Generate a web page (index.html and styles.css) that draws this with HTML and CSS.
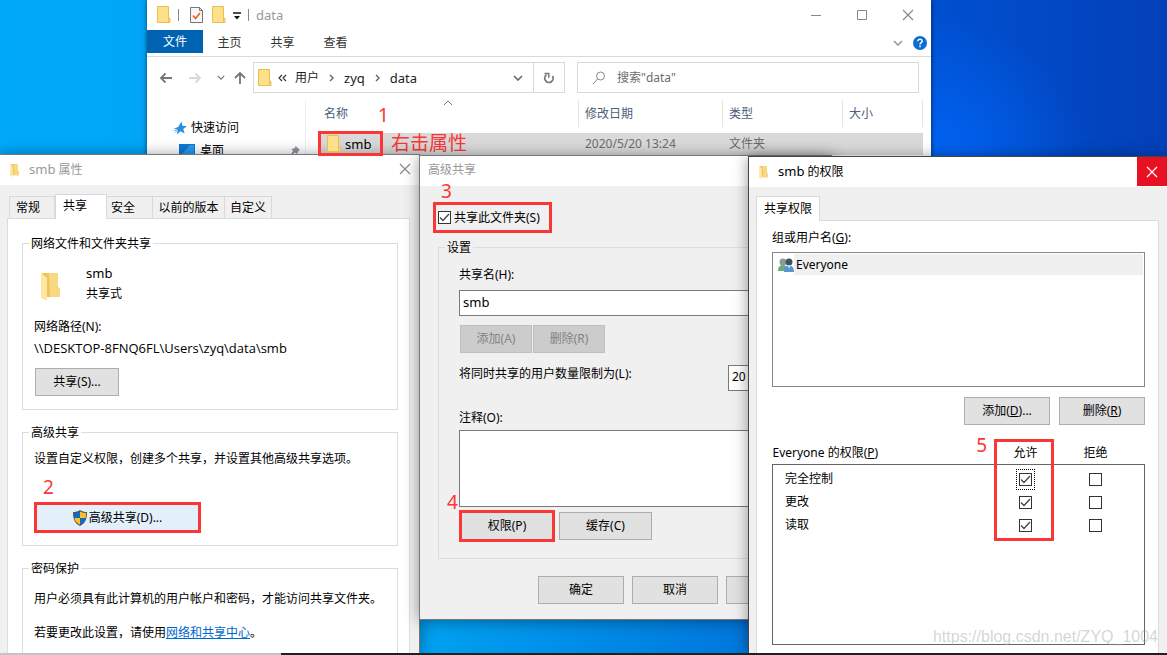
FILE: index.html
```html
<!DOCTYPE html>
<html lang="zh-CN">
<head>
<meta charset="utf-8">
<title>共享文件夹设置</title>
<link rel="stylesheet" href="styles.css">
</head>
<body>
<svg class="defs" aria-hidden="true">
  <symbol id="folder" viewBox="0 0 14 17">
    <path d="M.5.5h11v11l1.500 1v4H.5z" fill="#ffe08a" stroke="#e8c04e"/>
    <path d="M11.500 11.500v5" stroke="#e8c04e" fill="none"/>
  </symbol>
  <symbol id="folder-open" viewBox="0 0 19 28">
    <path d="M1 0h16v14l2 2v8H6z" fill="#ecc560"/>
    <path d="M8 0h9v14l2 2v8H9z" fill="#f8d880"/>
    <path d="M0 0l6 5v23l-6-3z" fill="#ffe7a0"/>
  </symbol>
  <symbol id="close" viewBox="0 0 12 12">
    <path d="M1 1l10 10M11 1L1 11" fill="none" stroke="currentColor" stroke-width="1.200"/>
  </symbol>
  <symbol id="chevron" viewBox="0 0 10 6">
    <path d="M1 1l4 4 4-4" fill="none" stroke="currentColor" stroke-width="1.600"/>
  </symbol>
</svg>
<main class="desktop">

  <section class="window explorer">
    <header class="explorer-title">
      <svg class="folder"><use href="#folder"/></svg>
      <i class="divider"></i>
      <svg class="doc" viewBox="0 0 13 16"><path d="M.5.5h9l3 3v12H.5z" fill="#f6f6f6" stroke="#777"/><path d="M9.500.5v3h3" fill="none" stroke="#777"/><path d="M3 8.500l2.500 3L10 6" fill="none" stroke="#e8601c" stroke-width="1.600"/></svg>
      <svg class="folder"><use href="#folder"/></svg>
      <svg class="quick" viewBox="0 0 8 8"><path d="M0 1h8" stroke="#111" stroke-width="1.500"/><path d="M1 4h6L4 7.500z" fill="#111"/></svg>
      <i class="divider"></i>
      <span class="latin">data</span>
      <div class="controls">
        <button aria-label="最小化"><svg viewBox="0 0 12 12"><path d="M1 6.500h10" stroke="currentColor"/></svg></button>
        <button aria-label="最大化"><svg viewBox="0 0 12 12"><path d="M1.500 1.500h9v9h-9z" fill="none" stroke="currentColor"/></svg></button>
        <button aria-label="关闭"><svg><use href="#close"/></svg></button>
      </div>
    </header>
    <nav class="ribbon">
      <button class="file">文件</button><button>主页</button><button>共享</button><button>查看</button>
      <span class="ribbon-end"><svg class="chev"><use href="#chevron"/></svg>
        <svg class="help" viewBox="0 0 14 14"><circle cx="7" cy="7" r="7" fill="#0a6fd0"/><path d="M4.800 5.200C4.800 2.600 9.300 2.700 9.200 5.200 9.100 6.600 7 6.700 7 8.500M7 9.600v1.700" fill="none" stroke="#fff" stroke-width="1.500"/></svg></span>
    </nav>
    <div class="address-row">
      <svg class="arrow" viewBox="0 0 14 12"><path d="M13 6H2M6.500 1.500L2 6l4.500 4.500" fill="none" stroke="#777" stroke-width="1.800"/></svg>
      <svg class="arrow" viewBox="0 0 14 12"><path d="M1 6h11M7.500 1.500L12 6l-4.500 4.500" fill="none" stroke="#d8d8d8" stroke-width="1.800"/></svg>
      <svg class="mini"><use href="#chevron"/></svg>
      <svg class="up" viewBox="0 0 12 14"><path d="M6 13V2M1 7l5-5 5 5" fill="none" stroke="#777" stroke-width="1.800"/></svg>
      <div class="address">
        <svg class="folder"><use href="#folder"/></svg>
        <svg class="crumb-more" viewBox="0 0 9 8"><path d="M4 1L1 4l3 3M8 1L5 4l3 3" fill="none" stroke="#333" stroke-width="1.200"/></svg>
        <span>用户</span><svg class="sep" viewBox="0 0 5 8"><path d="M1 1l3 3-3 3" fill="none" stroke="#666" stroke-width="1.400"/></svg>
        <span class="latin">zyq</span><svg class="sep" viewBox="0 0 5 8"><path d="M1 1l3 3-3 3" fill="none" stroke="#666" stroke-width="1.400"/></svg>
        <span class="latin">data</span>
        <svg class="drop"><use href="#chevron"/></svg>
        <button class="refresh" aria-label="刷新"><svg viewBox="0 0 12 12"><path d="M3.500 2.800A4.200 4.200 0 1 0 9.500 4" fill="none" stroke="#777" stroke-width="1.800"/><path d="M1.500 1.500h4.300v4.300" fill="none" stroke="#777" stroke-width="1.500"/></svg></button>
      </div>
      <label class="search">
        <svg viewBox="0 0 14 14"><circle cx="8.500" cy="5" r="4" fill="none" stroke="#888"/><path d="M5.500 8L1 13" stroke="#888"/></svg>
        <input type="text" aria-label="搜索" placeholder='搜索"data"'>
      </label>
    </div>
    <div class="explorer-main">
      <aside class="places">
        <div class="place"><svg class="star" viewBox="0 0 14 14"><path d="M8 0l1 4.500 5 .5-4 3 1.500 5L7 10.500 3 14l1-5-4-1.500 4.500-1.500z" fill="#2b8fdc"/><path d="M1 12l3-3M0 9.500h3" stroke="#65b3ea"/></svg>快速访问</div>
        <div class="place sub"><svg class="screen" viewBox="0 0 16 13"><path d="M0 0h16v13H0z" fill="#0f78d4"/><path d="M1 12L11 1h4v11z" fill="#2999ef"/></svg>桌面
          <svg class="pin" viewBox="0 0 10 10"><path d="M5.500 0L10 4 8.500 5 7 8 5 6.500 0 10l3-5L1.500 3 5 2z" fill="#8a949e"/></svg></div>
      </aside>
      <table class="files">
        <thead><tr><th class="c-name">名称<svg class="sort" viewBox="0 0 10 6"><path d="M1 5l4-4 4 4" fill="none" stroke="#777"/></svg><b class="num n1">1</b></th><th class="c-date">修改日期</th><th class="c-type">类型</th><th class="c-size">大小</th></tr></thead>
        <tbody><tr><td><span class="mark file-mark"><svg class="folder"><use href="#folder"/></svg><span class="latin">smb</span></span><b class="note">右击属性</b></td><td>2020/5/20 13:24</td><td>文件夹</td><td></td></tr></tbody>
      </table>
    </div>
  </section>

  <section class="window properties">
    <header class="title inactive">
      <svg class="folder-small"><use href="#folder-open"/></svg><span><span class="latin">smb</span> 属性</span>
      <button class="close" aria-label="关闭"><svg><use href="#close"/></svg></button>
    </header>
    <div class="tabs">
      <button>常规</button><button class="selected">共享</button><button>安全</button><button>以前的版本</button><button>自定义</button>
    </div>
    <div class="page">
      <fieldset class="g-share">
        <legend>网络文件和文件夹共享</legend>
        <div class="item"><svg class="folder-big"><use href="#folder-open"/></svg><div><p class="latin">smb</p><p>共享式</p></div></div>
        <p class="path-label">网络路径(N):</p>
        <p class="path">\\DESKTOP-8FNQ6FL\Users\zyq\data\smb</p>
        <button class="btn share-btn">共享(S)...</button>
      </fieldset>
      <fieldset class="g-adv">
        <legend>高级共享</legend>
        <p>设置自定义权限，创建多个共享，并设置其他高级共享选项。</p>
        <div class="adv-row"><b class="num n2">2</b>
          <button class="mark adv-btn"><svg viewBox="0 0 14 16"><path d="M7 0c2 1.500 4.500 2 7 2 0 6-1 11-7 14C1 13 0 8 0 2c2.500 0 5-.5 7-2z" fill="#555"/><path d="M7 1.500V8H1.300L1 3c2 0 4-.5 6-1.500z" fill="#1769c6"/><path d="M7 1.500V8h5.700L13 3c-2 0-4-.5-6-1.500z" fill="#fbc02d"/><path d="M7 8v6.700C3.500 13 2 11 1.300 8z" fill="#fbc02d"/><path d="M7 8v6.700c3.500-1.700 5-3.700 5.700-6.700z" fill="#1769c6"/></svg>高级共享(D)...</button></div>
      </fieldset>
      <fieldset class="g-pass">
        <legend>密码保护</legend>
        <p>用户必须具有此计算机的用户帐户和密码，才能访问共享文件夹。</p>
        <p class="center-link">若要更改此设置，请使用<a href="#">网络和共享中心</a>。</p>
      </fieldset>
    </div>
  </section>

  <section class="window advanced">
    <header class="title inactive plain"><span>高级共享</span></header>
    <div class="adv-body">
      <div class="check-row"><b class="num n3">3</b>
        <label class="mark check-label"><input type="checkbox" checked>共享此文件夹(S)</label></div>
      <fieldset class="g-settings">
        <legend>设置</legend>
        <label class="line" for="share-name">共享名(H):</label>
        <input class="box latin" id="share-name" type="text" value="smb">
        <div class="pair"><button class="btn" disabled>添加(A)</button><button class="btn" disabled>删除(R)</button></div>
        <div class="limit"><label for="limit">将同时共享的用户数量限制为(L):</label><input class="box" id="limit" type="text" value="20"></div>
        <label class="line comment-label" for="comment">注释(O):</label>
        <textarea class="box" id="comment"></textarea>
        <div class="actions"><b class="num n4">4</b><button class="btn mark perm-btn">权限(P)</button><button class="btn cache-btn">缓存(C)</button></div>
      </fieldset>
      <footer><button class="btn">确定</button><button class="btn">取消</button><button class="btn">应用</button></footer>
    </div>
  </section>

  <section class="window permissions">
    <header class="title">
      <svg class="folder-small"><use href="#folder-open"/></svg><span><span class="latin">smb</span> 的权限</span>
      <button class="close red" aria-label="关闭"><svg><use href="#close"/></svg></button>
    </header>
    <div class="tabs"><button class="selected">共享权限</button></div>
    <div class="page">
      <p>组或用户名(<u>G</u>):</p>
      <ul class="users"><li><svg viewBox="0 0 16 14"><circle cx="5" cy="4" r="3.500" fill="#8b9c94"/><path d="M0 13c0-4 2-6 5-6s4 2 4 6z" fill="#6ea882"/><circle cx="11" cy="4" r="3.500" fill="#3d5266"/><path d="M6 14c0-5 2-6.500 5-6.500s5 2 5 6.500z" fill="#5b95cf"/><path d="M9.500 7.500l1.500 3 1.500-3z" fill="#e5eef7"/></svg><span>Everyone</span></li></ul>
      <div class="user-actions"><button class="btn">添加(<u>D</u>)...</button><button class="btn">删除(<u>R</u>)</button></div>
      <div class="grants-wrap">
        <table class="grants">
          <thead><tr><th>Everyone 的权限(<u>P</u>)</th><th class="c-allow">允许</th><th class="c-deny">拒绝</th><th class="c-end"></th></tr></thead>
          <tbody>
            <tr><td>完全控制</td><td><span class="focus"><input type="checkbox" checked aria-label="完全控制 允许"></span></td><td><input type="checkbox" aria-label="完全控制 拒绝"></td><td></td></tr>
            <tr><td>更改</td><td><input type="checkbox" checked aria-label="更改 允许"></td><td><input type="checkbox" aria-label="更改 拒绝"></td><td></td></tr>
            <tr><td>读取</td><td><input type="checkbox" checked aria-label="读取 允许"></td><td><input type="checkbox" aria-label="读取 拒绝"></td><td></td></tr>
          </tbody>
        </table>
        <i class="mark allow-mark"></i><b class="num n5">5</b>
      </div>
    </div>
  </section>

  <div class="taskbar"></div>
  <div class="watermark">https://blog.csdn.net/ZYQ_1004</div>
</main>
</body>
</html>
```
FILE: styles.css
```css
* { box-sizing: border-box; }
body, p, ul, fieldset { margin: 0; padding: 0; }
body, button, input, textarea {
  font-family: "Noto Sans", "Noto Sans CJK SC", sans-serif;
  font-size: 12px;
  line-height: 20px;
  color: #000;
}
button { margin: 0; padding: 0; border: 0; background: none; white-space: nowrap; }
svg { display: block; flex: none; }
th { font-weight: 400; text-align: left; }
.defs { position: absolute; width: 0; height: 0; }
.latin { font-size: 13px; }
.path { font-family: "Open Sans", "Noto Sans", sans-serif; font-size: 13px; }

.desktop {
  position: relative;
  height: 100vh;
  overflow: hidden;
  background:
    radial-gradient(circle at 80% 25%, #0064f4 0, rgba(0, 90, 230, 0) 150px),
    linear-gradient(90deg, #00a8fa 0%, #00a0f0 37%, #0078dc 63%, #0050d0 80%, #0340b8 100%);
}
.window { position: absolute; background: #f0f0f0; box-shadow: 0 1px 14px rgba(0, 0, 0, .4); }

/* annotations */
.mark { border: 3px solid #fb3636; }
.num, .note { position: absolute; color: #fb3636; font-weight: 400; font-size: 19px; line-height: 20px; }

/* explorer */
.explorer { left: 147px; right: 236px; top: 0; background: #fff; box-shadow: 0 0 5px rgba(0, 0, 0, .6); }
.folder { width: 14px; height: 17px; }
.explorer-title { display: flex; align-items: center; height: 29px; padding-left: 10px; color: #999; }
.divider { width: 1px; height: 12px; margin: 0 7px; background: #888; }
.doc { width: 13px; height: 16px; margin: 0 9px 0 4px; }
.quick { width: 8px; height: 8px; margin: 3px 0 0 7px; }
.controls { display: flex; margin-left: auto; }
.controls button { display: grid; place-items: center; width: 46px; height: 29px; color: #888; }
.controls svg { width: 12px; height: 12px; }
.ribbon { display: flex; height: 28px; padding-top: 1px; border-bottom: 1px solid #dadada; }
.ribbon button { width: 53px; height: 25px; color: #333; }
.ribbon .file { width: 56px; height: 23px; background: #0063b1; color: #fff; }
.ribbon-end { display: flex; align-items: center; gap: 10px; margin-left: auto; padding-right: 4px; color: #999; }
.chev { width: 10px; height: 6px; }
.help { width: 14px; height: 14px; }
.address-row { display: flex; align-items: center; height: 36px; padding: 5px 12px 0 12px; color: #777; }
.arrow { width: 14px; height: 12px; margin-right: 15px; }
.mini { width: 8px; height: 5px; margin-right: 9px; }
.up { width: 12px; height: 14px; margin-right: 7px; }
.address { display: flex; align-items: center; width: 312px; height: 31px; padding-left: 4px; border: 1px solid #d9d9d9; color: #222; }
.crumb-more { width: 9px; height: 8px; margin: 0 8px 0 6px; }
.sep { width: 5px; height: 8px; margin: 0 10px; }
.drop { width: 10px; height: 6px; margin: 0 10px 0 auto; color: #666; }
.refresh { display: grid; place-items: center; width: 31px; height: 29px; border-left: 1px solid #d9d9d9; }
.refresh svg { width: 12px; height: 12px; }
.search { display: flex; flex: 1; align-items: center; height: 31px; margin-left: 12px; padding-left: 14px; border: 1px solid #d9d9d9; }
.search svg { width: 14px; height: 14px; }
.search input { flex: 1; min-width: 0; margin-left: 11px; padding: 0; border: 0; outline: 0; background: none; }
.search input::placeholder { color: #6d6d6d; }
.explorer-main { display: flex; padding-top: 7px; }
.places { width: 159px; padding: 16px 5px 0 27px; border-right: 1px solid #eee; }
.place { display: flex; align-items: center; gap: 4px; height: 23px; }
.sub { padding-left: 5px; gap: 5px; }
.star { width: 13px; height: 14px; }
.screen { width: 16px; height: 13px; }
.pin { width: 10px; height: 10px; margin-left: auto; }
.files { flex: 1; align-self: flex-start; margin: 0 8px 0 12px; border-spacing: 0; table-layout: fixed; }
.files th { position: relative; height: 27px; padding: 0 0 0 6px; border-right: 1px solid #e5e5e5; color: #4c607a; }
.files tbody::before { content: ""; display: block; height: 6px; }
.files td { position: relative; height: 22px; padding: 0 0 0 6px; background: #d9d9d9; color: #6d6d6d; }
.c-date { width: 144px; }
.c-type { width: 120px; }
.c-size { width: 80px; }
.sort { position: absolute; left: 125px; top: 0; width: 10px; height: 6px; }
.n1 { left: 60px; top: 5px; }
.file-mark { position: absolute; z-index: 5; left: 0; top: -2px; display: flex; align-items: center; gap: 4px; width: 65px; height: 25px; padding-left: 6px; color: #000; }
.note { left: 73px; top: 0; }

/* dialogs */
.title { display: flex; align-items: center; height: 30px; padding-left: 10px; background: #fff; }
.title > span { line-height: 28px; height: 30px; }
.inactive { color: #999; }
.folder-small { width: 9px; height: 13px; margin-right: 10px; }
.close { display: grid; place-items: center; align-self: flex-start; width: 28px; height: 28px; margin-left: auto; color: #888; }
.close svg { width: 12px; height: 12px; }
.red { width: 30px; height: 29px; background: #e81123; color: #fff; }
.btn { height: 28px; border: 1px solid #adadad; background: #e1e1e1; }
.btn:disabled { border-color: #bfbfbf; background: #ccc; color: #838383; }
.btn.mark { border: 3px solid #fb3636; }
.tabs { display: flex; align-items: flex-end; height: 33px; }
.tabs button { height: 22px; border: 1px solid #d9d9d9; border-width: 1px 1px 0 0; }
.tabs .selected { position: relative; height: 25px; margin-bottom: -1px; border-left-width: 1px; background: #fff; }
.page { border: 1px solid #dcdcdc; border-bottom: 0; background: #fff; }
fieldset { min-width: 0; border: 1px solid #dcdcdc; }
legend { height: 16px; padding: 0 2px; line-height: 18px; }
input[type="checkbox"] {
  appearance: none;
  display: block;
  width: 13px;
  height: 13px;
  margin: 0;
  border: 1px solid #333;
  background: #fff;
}
input[type="checkbox"]:checked {
  background: #fff url("data:image/svg+xml,%3Csvg xmlns='http://www.w3.org/2000/svg' viewBox='0 0 11 11'%3E%3Cpath d='M1 5.500l3 3 6-6.500' fill='none' stroke='%23444' stroke-width='1.300'/%3E%3C/svg%3E") center / 11px 11px no-repeat;
}

/* properties */
.properties { left: 0; top: 154px; bottom: 2px; width: 420px; border: solid #777; border-width: 1px 1px 0 0; overflow: hidden; }
.properties .tabs { padding-left: 9px; }
.properties .tabs button { padding: 0 6px; }
.properties .tabs button:nth-child(1) { width: 46px; padding-right: 16px; border-left-width: 1px; }
.properties .tabs .selected { width: 52px; padding: 0 20px 3px 7px; }
.properties .tabs button:nth-child(3) { width: 46px; padding: 0 18px 0 4px; }
.properties .tabs button:nth-child(4) { width: 72px; padding: 0 5px; }
.properties .tabs button:nth-child(5) { width: 47px; padding: 0 5px; }
.properties .page { height: 100%; margin: 0 9px 0 7px; padding: 16px 11px 0 14px; }
.properties fieldset { margin-bottom: 14px; padding: 0 0 0 11px; }
.properties legend { margin-left: -5px; }
.properties .g-share { padding-top: 12px; padding-bottom: 13px; }
.item { display: flex; align-items: center; gap: 26px; padding-left: 7px; }
.item p + p { margin-top: 1px; }
.folder-big { width: 19px; height: 28px; margin-top: 6px; }
.path-label { margin: 13px 0 1px; }
.share-btn { width: 84px; margin: 10px 0 0 1px; }
.properties .g-adv { padding-top: 9px; padding-bottom: 12px; }
.adv-row { position: relative; margin-top: 33px; }
.n2 { left: 9px; top: -25px; }
.adv-btn { display: flex; align-items: center; justify-content: center; gap: 2px; width: 167px; height: 31px; background: #e3effb; }
.adv-btn svg { width: 14px; height: 16px; }
.properties .g-pass { height: 200px; padding-top: 13px; }
.center-link { margin-top: 14px; }
a { color: #0066cc; }

/* advanced sharing */
.advanced { left: 419px; top: 155px; width: 413px; border: 1px solid #777; }
.plain { padding-left: 8px; }
.adv-body { padding: 16px 19px 15px 18px; }
.check-row { position: relative; display: flex; margin: 0 0 6px -5px; }
.n3 { left: 8px; top: -21px; }
.check-label { display: flex; align-items: center; gap: 3px; height: 31px; padding: 0 9px 0 2px; }
.g-settings { padding: 10px 20px 16px; }
.g-settings legend { margin-left: -14px; }
.line { display: block; }
.box { display: block; border: 1px solid #7a7a7a; background: #fff; outline: 0; }
input.box { height: 26px; padding: 0 3px; }
#share-name { width: 100%; margin-top: 5px; padding-bottom: 3px; }
.pair { display: flex; gap: 1px; margin: 9px 0 0 1px; }
.pair .btn { width: 72px; }
.limit { display: flex; justify-content: space-between; margin-top: 12px; line-height: 18px; }
.limit label { line-height: 18px; }
#limit { width: 63px; padding-bottom: 3px; }
.comment-label { margin-top: 17px; }
#comment { width: 100%; height: 77px; margin-top: 2px; resize: none; }
.actions { position: relative; display: flex; align-items: center; gap: 4px; margin-top: 3px; }
.n4 { left: -12px; top: -18px; }
.perm-btn { width: 96px; height: 32px; }
.cache-btn { width: 93px; }
.advanced footer { display: flex; justify-content: flex-end; gap: 8px; margin-top: 17px; }
.advanced footer .btn { width: 86px; }

/* permissions */
.permissions { left: 748px; right: 0; top: 156px; bottom: 2px; border: solid #444; border-width: 1px 0 0 1px; overflow: hidden; }
.permissions .tabs { padding-left: 7px; }
.permissions .tabs .selected { width: 64px; }
.permissions .page { height: 100%; margin: 0 8px 0 7px; padding: 7px 13px 0 15px; }
.users { height: 135px; margin-top: 4px; padding: 1px; border: 1px solid #828790; list-style: none; }
.users li { display: flex; align-items: center; height: 21px; padding-left: 4px; }
.users svg { width: 16px; height: 14px; }
.users span { flex: 1; height: 21px; padding-left: 2px; line-height: 22px; background: #f0f0f0; }
.user-actions { display: flex; justify-content: flex-end; gap: 9px; margin-top: 10px; }
.user-actions .btn { width: 86px; }
.grants-wrap { position: relative; margin-top: 17px; }
.grants { width: 100%; border-collapse: collapse; table-layout: fixed; }
.grants th { height: 22px; padding: 0; line-height: 18px; }
.grants .c-allow, .grants .c-deny { width: 70px; text-align: center; }
.grants .c-end { width: 14px; }
.grants tbody { border: 1px solid #646464; }
.grants tbody::before { content: ""; display: block; height: 3px; }
.grants tbody::after { content: ""; display: block; height: 107px; }
.grants td { height: 23px; padding: 0 0 0 12px; }
.grants td input { margin: 0 auto; }
.grants td:nth-child(2), .grants td:nth-child(3) { padding: 0; }
.focus { display: grid; place-items: center; width: 19px; height: 21px; margin: 0 auto; border: 1px dotted #000; }
.allow-mark { position: absolute; right: 91px; top: -3px; width: 60px; height: 102px; }
.n5 { right: 158px; top: -7px; }

.taskbar { position: absolute; left: 0; right: 0; bottom: 0; height: 2px; background: linear-gradient(90deg, #c4c4c4 281px, #202020 281px); }
.watermark { position: absolute; right: 9px; bottom: 8px; font-family: "Liberation Sans", sans-serif; font-size: 16px; color: rgba(160, 160, 160, .45); }
```
